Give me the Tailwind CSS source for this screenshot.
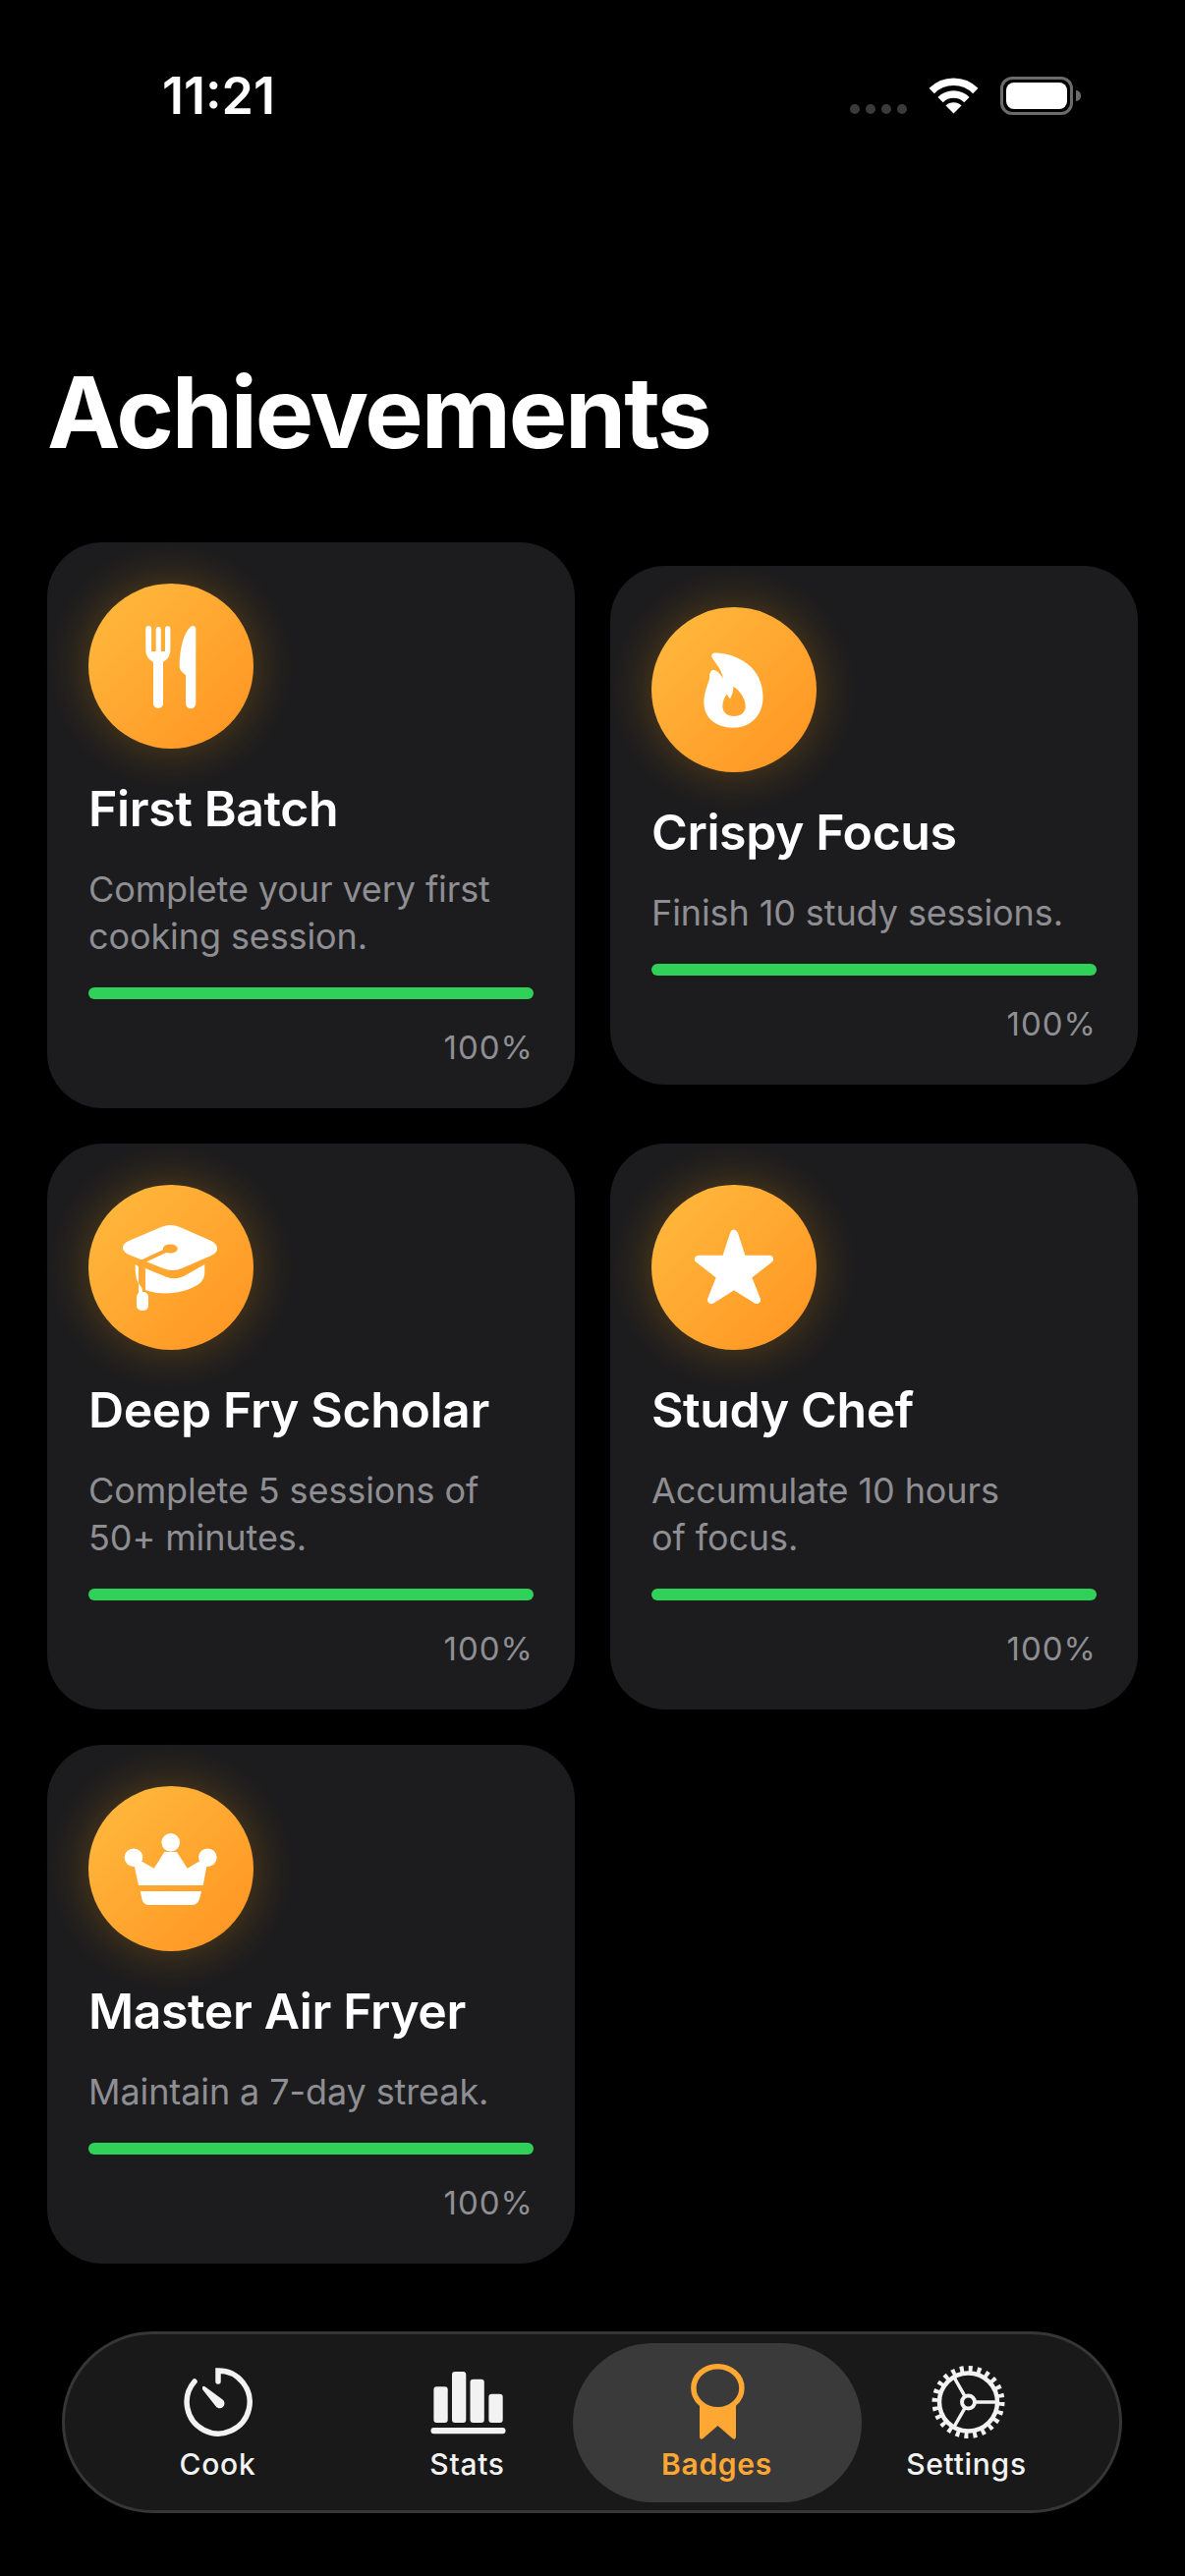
<!DOCTYPE html>
<html>
<head>
<meta charset="utf-8">
<script src="https://cdn.jsdelivr.net/npm/@tailwindcss/browser@4"></script>
</head>
<body class="bg-black m-0">
<div class="w-[1206px] h-[2622px] bg-black font-['Inter',sans-serif] text-white overflow-hidden">
  <!-- status bar -->
  <div class="flex justify-between pl-[165px] pr-[106px] pt-[76px] h-[120px]">
    <div class="text-[52px] leading-[44px] font-semibold">11:21</div>
    <div class="flex items-start mt-[2px]">
      <div class="flex gap-[6px] mt-[28px] mr-[22px]">
        <span class="w-[10px] h-[10px] rounded-full bg-[#3a3a3a]"></span>
        <span class="w-[10px] h-[10px] rounded-full bg-[#3a3a3a]"></span>
        <span class="w-[10px] h-[10px] rounded-full bg-[#3a3a3a]"></span>
        <span class="w-[10px] h-[10px] rounded-full bg-[#3a3a3a]"></span>
      </div>
      <svg class="w-[51px] h-[38px]" viewBox="0 0 51 38" fill="none">
        <path d="M3.2 14.5A31.5 31.5 0 0 1 47.8 14.5" stroke="#fff" stroke-width="7.5"/>
        <path d="M12.1 23.6A19 19 0 0 1 38.9 23.6" stroke="#fff" stroke-width="7.5"/>
        <path d="M25.5 37.5L17.5 29.5A11.3 11.3 0 0 1 33.5 29.5Z" fill="#fff"/>
      </svg>
      <div class="ml-[22px] w-[74px] h-[39px] rounded-[12px] border-[3px] border-[#6b6b6b] p-[3px]">
        <div class="w-full h-full rounded-[8px] bg-white"></div>
      </div>
      <div class="ml-[3px] mt-[14px] w-[5px] h-[11px] rounded-r-full bg-[#6b6b6b]"></div>
    </div>
  </div>

  <!-- title -->
  <h1 class="ml-[48px] mt-[238px] text-[100px] leading-[124px] font-bold tracking-[-2.2px]">Achievements</h1>

  <!-- cards -->
  <div class="mx-[48px] mt-[70px] grid grid-cols-2 gap-x-[36px] gap-y-[36px] items-center">
    <div class="bg-[#1c1c1e] rounded-[56px] p-[42px]">
      <div class="w-[168px] h-[168px] rounded-full bg-gradient-to-br from-[#ffbb3e] to-[#ff9320] shadow-[0_0_48px_rgba(255,159,10,0.3)]">
        <svg class="w-full h-full" viewBox="0 0 168 168" fill="#fff">
          <path d="M58.3 46a2.9 2.9 0 0 1 5.8 0V69H68.7V46a2.6 2.6 0 0 1 5.1 0V69H78V46a2.7 2.7 0 0 1 5.4 0V67c0 6-2.5 10-7.4 13V122a5 5 0 0 1-10 0V80C60.8 77 58.3 73 58.3 67Z"/>
          <path d="M109.3 46V122a5.1 5.1 0 0 1-10.3 0V93C95 90 92.7 88 92.7 84C92.7 66 97 50 104 44C106 42 109.3 43 109.3 46Z"/>
        </svg>
      </div>
      <div class="mt-[31px] text-[50px] leading-[60px] font-semibold tracking-[-0.4px]">First Batch</div>
      <div class="mt-[28px] text-[36px] leading-[48px] tracking-[-0.1px] text-[#8e8e93]">Complete your very first<br>cooking session.</div>
      <div class="mt-[28px] h-[12px] rounded-full bg-[#30d158]"></div>
      <div class="mt-[29px] text-[33px] leading-[40px] tracking-[1px] text-right text-[#8e8e93]">100%</div>
    </div>

    <div class="bg-[#1c1c1e] rounded-[56px] p-[42px]">
      <div class="w-[168px] h-[168px] rounded-full bg-gradient-to-br from-[#ffbb3e] to-[#ff9320] shadow-[0_0_48px_rgba(255,159,10,0.3)]">
        <svg class="w-full h-full" viewBox="0 0 168 168" fill="#fff" fill-rule="evenodd">
          <path d="M62 52C60 48 62 46 66 46.5C92 48 113.5 64 113.5 92C113.5 110 101 122.7 83 122.7C65 122.7 53.4 112 53.4 97C53.4 87 57 80 59 73C59 67 60 64 63 64C67 64 70 68 72.7 72.7C72 64 66 58 62 52ZM83.4 80.7C90 85 95.7 93 95.7 101C95.7 107 91 111 84 111C77 111 72.4 107 72.4 101C72.4 96 74 92 76.7 88.4C77.5 90 79 92 80 93.4C82 90 83.5 85 83.4 80.7Z"/>
        </svg>
      </div>
      <div class="mt-[31px] text-[50px] leading-[60px] font-semibold tracking-[-0.4px]">Crispy Focus</div>
      <div class="mt-[28px] text-[36px] leading-[48px] tracking-[-0.1px] text-[#8e8e93]">Finish 10 study sessions.</div>
      <div class="mt-[28px] h-[12px] rounded-full bg-[#30d158]"></div>
      <div class="mt-[29px] text-[33px] leading-[40px] tracking-[1px] text-right text-[#8e8e93]">100%</div>
    </div>

    <div class="bg-[#1c1c1e] rounded-[56px] p-[42px]">
      <div class="w-[168px] h-[168px] rounded-full bg-gradient-to-br from-[#ffbb3e] to-[#ff9320] shadow-[0_0_48px_rgba(255,159,10,0.3)]">
        <svg class="w-full h-full" viewBox="0 0 168 168">
          <path fill="#fff" d="M35 64Q35 60 41 57L74 43Q83 39 93 43L125 57Q131 60 131 65Q131 69 125 72L95 85Q86 89 76 85L41 71Q35 68 35 64Z"/>
          <path fill="none" stroke="#ffa730" stroke-width="4" d="M83 65L53 79V108"/>
          <ellipse cx="83.3" cy="65" rx="7.5" ry="4.5" fill="#ffa730"/>
          <path fill="#fff" d="M58 85Q70 90 80 94Q88 97 97 93L118.3 81V90Q118 100 105 105Q90 112 70 110Q63 109 58 107Z"/>
          <path fill="#fff" d="M47.7 81L51 83V101Q48 95 47.7 88Z"/>
          <path fill="#fff" d="M51 100L55 106V110H51Z"/>
          <rect x="49" y="109" width="12" height="19" rx="5" fill="#fff"/>
        </svg>
      </div>
      <div class="mt-[31px] text-[50px] leading-[60px] font-semibold tracking-[-0.4px]">Deep Fry Scholar</div>
      <div class="mt-[28px] text-[36px] leading-[48px] tracking-[-0.1px] text-[#8e8e93]">Complete 5 sessions of<br>50+ minutes.</div>
      <div class="mt-[28px] h-[12px] rounded-full bg-[#30d158]"></div>
      <div class="mt-[29px] text-[33px] leading-[40px] tracking-[1px] text-right text-[#8e8e93]">100%</div>
    </div>

    <div class="bg-[#1c1c1e] rounded-[56px] p-[42px]">
      <div class="w-[168px] h-[168px] rounded-full bg-gradient-to-br from-[#ffbb3e] to-[#ff9320] shadow-[0_0_48px_rgba(255,159,10,0.3)]">
        <svg class="w-full h-full" viewBox="0 0 168 168">
          <path fill="#fff" stroke="#fff" stroke-width="8" stroke-linejoin="round" d="M84 49.7L92.5 75.7H120L97.5 93L107 117L84 102.5L61 117L70.5 93L48 75.7H75.5Z"/>
        </svg>
      </div>
      <div class="mt-[31px] text-[50px] leading-[60px] font-semibold tracking-[-0.4px]">Study Chef</div>
      <div class="mt-[28px] text-[36px] leading-[48px] tracking-[-0.1px] text-[#8e8e93]">Accumulate 10 hours<br>of focus.</div>
      <div class="mt-[28px] h-[12px] rounded-full bg-[#30d158]"></div>
      <div class="mt-[29px] text-[33px] leading-[40px] tracking-[1px] text-right text-[#8e8e93]">100%</div>
    </div>

    <div class="bg-[#1c1c1e] rounded-[56px] p-[42px]">
      <div class="w-[168px] h-[168px] rounded-full bg-gradient-to-br from-[#ffbb3e] to-[#ff9320] shadow-[0_0_48px_rgba(255,159,10,0.3)]">
        <svg class="w-full h-full" viewBox="0 0 168 168" fill="#fff">
          <circle cx="83.7" cy="57.3" r="9.3"/>
          <circle cx="46" cy="72.7" r="9.3"/>
          <circle cx="121.3" cy="72.7" r="9.3"/>
          <path d="M46 78L55 77L66.7 83.7L77.3 67H90L100.7 83.7L112 77L121 78L116.7 101H51Z"/>
          <path d="M52.7 107H115L113 115Q111 121 105 121H61.7Q56 121 54.5 115Z"/>
        </svg>
      </div>
      <div class="mt-[31px] text-[50px] leading-[60px] font-semibold tracking-[-0.4px]">Master Air Fryer</div>
      <div class="mt-[28px] text-[36px] leading-[48px] tracking-[-0.1px] text-[#8e8e93]">Maintain a 7-day streak.</div>
      <div class="mt-[28px] h-[12px] rounded-full bg-[#30d158]"></div>
      <div class="mt-[29px] text-[33px] leading-[40px] tracking-[1px] text-right text-[#8e8e93]">100%</div>
    </div>
  </div>

  <!-- tab bar -->
  <div class="mt-[69px] ml-[63px] w-[1079px] h-[185px] rounded-full bg-[#191919] border-[3px] border-[#363636] grid grid-cols-[254px_254px_254px_254px] justify-center">
    <div class="flex flex-col items-center pt-[29px]">
      <svg class="w-[80px] h-[80px]" viewBox="0 0 80 80" fill="none">
        <path d="M40 19V8A32 32 0 1 1 16 19" stroke="#f2f2f2" stroke-width="5.5" stroke-linecap="round"/>
        <path fill="#f2f2f2" d="M24 24.5Q25 23 27 24.5L44 37A5 5 0 1 1 37 43.5L24 27Z"/>
      </svg>
      <div class="text-[30px] leading-[36px] font-medium tracking-[0.7px] text-[#f2f2f2] mt-[5px]">Cook</div>
    </div>
    <div class="flex flex-col items-center pt-[29px]">
      <svg class="w-[80px] h-[80px]" viewBox="0 0 80 80" fill="#f2f2f2">
        <rect x="5.4" y="24.3" width="14.3" height="36.7" rx="3"/>
        <rect x="24" y="9" width="14.3" height="52" rx="3"/>
        <rect x="42.5" y="16.7" width="14.3" height="44.3" rx="3"/>
        <rect x="61.4" y="31.7" width="14.3" height="29.3" rx="3"/>
        <rect x="2.5" y="66" width="76" height="6.3" rx="3"/>
      </svg>
      <div class="text-[30px] leading-[36px] font-medium tracking-[0.7px] text-[#f2f2f2] mt-[5px]">Stats</div>
    </div>
    <div class="relative flex flex-col items-center pt-[29px]">
      <div class="absolute left-[-20px] right-[-20px] top-[9px] h-[162px] rounded-full bg-[#3a3a3a]"></div>
      <svg class="relative w-[80px] h-[80px]" viewBox="0 0 80 80" fill="none">
        <ellipse cx="40.4" cy="25.7" rx="24.5" ry="22" stroke="#ffa733" stroke-width="5.5"/>
        <path fill="#ffa733" d="M22 42V75Q22 79 25.5 77L40.5 64L55.5 77Q59 79 59 75V42Q50 50 40.5 50Q31 50 22 42Z"/>
      </svg>
      <div class="relative text-[30px] leading-[36px] font-semibold tracking-[0.7px] text-[#ffa733] mt-[5px]">Badges</div>
    </div>
    <div class="flex flex-col items-center pt-[29px]">
      <svg class="w-[80px] h-[80px]" viewBox="-1.5 0 80 80" fill="none" stroke="#f2f2f2">
        <circle cx="40" cy="40" r="29.5" stroke-width="4.5"/>
        <circle cx="40" cy="40" r="34" stroke-width="6" stroke-dasharray="4 4.9"/>
        <circle cx="40" cy="40" r="6.5" stroke-width="4"/>
        <path d="M46.5 40H70M36.7 34.4L25 14M36.7 45.6L25 66" stroke-width="3.5"/>
      </svg>
      <div class="text-[30px] leading-[36px] font-medium tracking-[0.7px] text-[#f2f2f2] mt-[5px]">Settings</div>
    </div>
  </div>
</div>
</body>
</html>
